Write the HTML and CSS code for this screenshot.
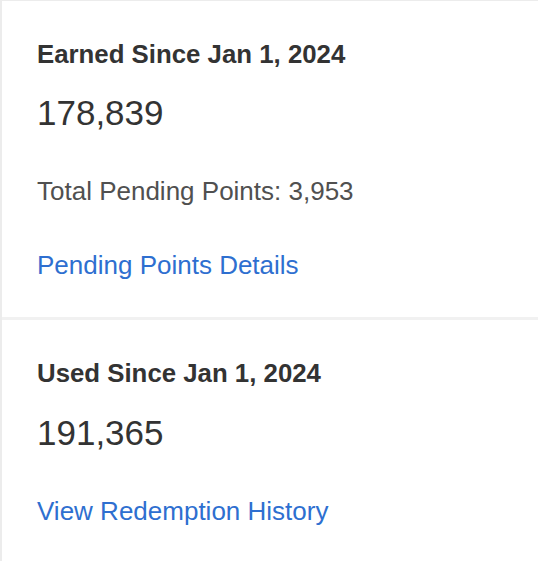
FILE: index.html
```html
<!DOCTYPE html>
<html>
<head>
<meta charset="utf-8">
<link rel="stylesheet" href="styles.css">
</head>
<body>
<div class="panel">
  <section class="block block-earned">
    <div class="title">Earned Since Jan 1, 2024</div>
    <div class="value">178,839</div>
    <div class="pending">Total Pending Points: 3,953</div>
    <a class="link" href="#">Pending Points Details</a>
  </section>
  <section class="block block-used">
    <div class="title">Used Since Jan 1, 2024</div>
    <div class="value value-used">191,365</div>
    <a class="link link-after-value" href="#">View Redemption History</a>
  </section>
</div>
</body>
</html>
```
FILE: styles.css
```css
html, body {
  margin: 0;
  padding: 0;
  background: #ffffff;
}
body {
  font-family: "Liberation Sans", Arial, sans-serif;
  width: 538px;
  height: 562px;
  overflow: hidden;
}
.panel {
  border-left: 2px solid #ececec;
  border-top: 1px solid #ececec;
  height: 561px;
  box-sizing: border-box;
}
.block {
  display: flex;
  flex-direction: column;
  align-items: flex-start;
  padding-left: 35px;
}
.block-earned {
  padding-top: 38px;
  padding-bottom: 37px;
}
.block-used {
  border-top: 3px solid #f1f1f1;
  padding-top: 38px;
}
.title {
  font-size: 25.8px;
  line-height: 30px;
  font-weight: bold;
  color: #333333;
}
.value {
  margin-top: 24px;
  font-size: 35px;
  line-height: 40px;
  color: #333333;
}
.value-used {
  margin-top: 25px;
}
.pending {
  margin-top: 43px;
  font-size: 26px;
  line-height: 30px;
  color: #505050;
}
.link {
  margin-top: 44px;
  font-size: 26px;
  line-height: 30px;
  color: #2e6fd0;
  text-decoration: none;
}
.link-after-value {
  margin-top: 43px;
}
```
